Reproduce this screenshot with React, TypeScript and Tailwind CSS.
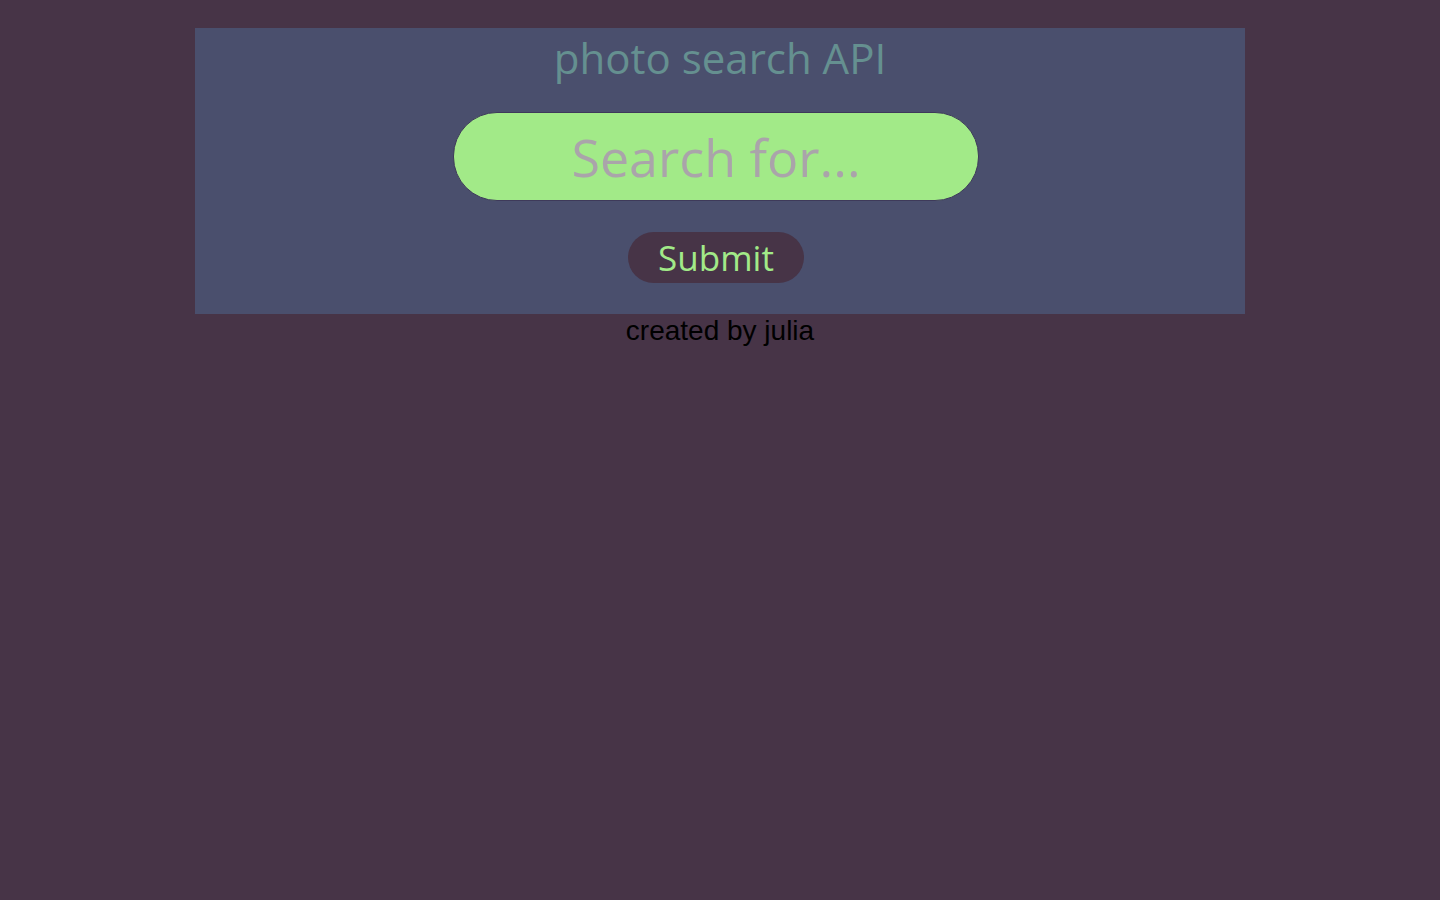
import React from "react";

export default function App() {
  return (
    <div className="min-h-screen w-full bg-[#473447] pt-[28px]">
      <div className="mx-auto flex w-[1050px] flex-col items-center bg-[#4a4f6d] pb-[31px]">
        <h1 className="mt-[2px] text-[42px] leading-[56px] text-[#659090] font-['Open_Sans',sans-serif]">
          photo search API
        </h1>
        <form className="flex flex-col items-center" onSubmit={(e) => e.preventDefault()}>
          <input
            type="text"
            placeholder="Search for..."
            className="mr-[8px] mt-[26px] h-[89px] w-[526px] rounded-[44px] border border-[#3e3a5a] bg-[#a2ea88] text-center text-[52px] text-[#555] outline-none placeholder:text-[#aaa4aa] font-['Open_Sans',sans-serif]"
          />
          <button className="mr-[8px] mt-[31px] h-[51px] w-[176px] rounded-[26px] bg-[#473447] text-[35px] leading-[51px] text-[#a2ea88] font-['Open_Sans',sans-serif]">
            Submit
          </button>
        </form>
      </div>
      <p className="text-center text-[28px] leading-[34px] text-black font-['Liberation_Sans',Arial,sans-serif]">
        created by julia
      </p>
    </div>
  );
}
